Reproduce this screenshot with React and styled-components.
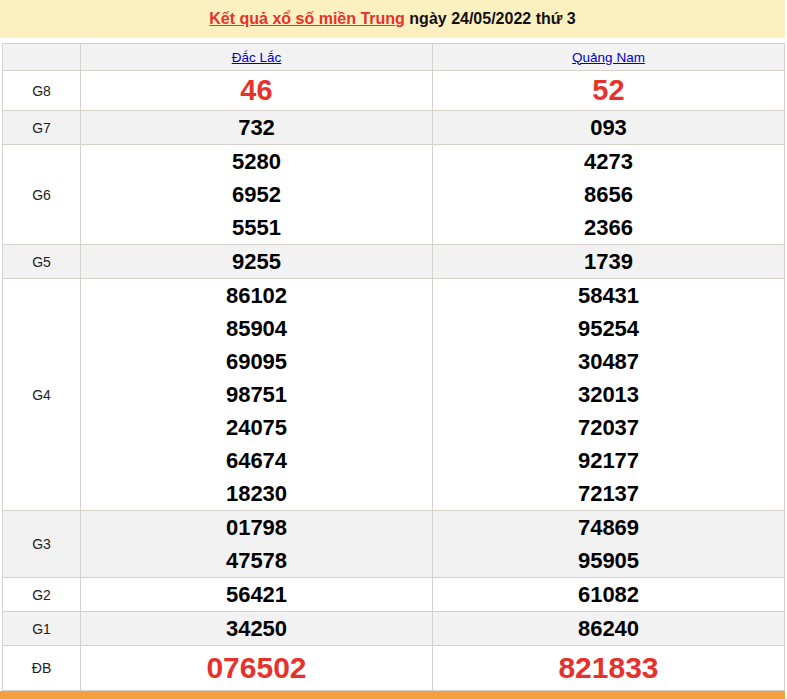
import React from 'react';
import styled, { createGlobalStyle } from 'styled-components';

const GlobalStyle = createGlobalStyle`
  body {
    margin: 0;
    background: #fff;
    font-family: Arial, "Liberation Sans", sans-serif;
  }
`

const Wrapper = styled.div`
  width: 785px;
`

const Heading = styled.h2`
  margin: 0 0 5px;
  height: 38px;
  line-height: 37px;
  background: #fdf0c0;
  text-align: center;
  font-size: 16px;
  font-weight: bold;
  color: #111;
`

const HeadingLink = styled.a`
  color: #e5322d;
  text-decoration: underline;
`

const Table = styled.table`
  width: 783px;
  margin-left: 2px;
  border-collapse: collapse;
  table-layout: fixed;
  border: 1px solid #d6d2cb;
`

const Row = styled.tr`
  background: ${(p) => (p.$gray ? '#f2f2f2' : '#fff')};
`

const HeadCell = styled.th`
  border: 1px solid #d6d2cb;
  padding: 0;
  height: 26px;
  font-size: 13.5px;
  font-weight: normal;
  text-align: center;
`

const ProvinceLink = styled.a`
  color: #0000cc;
  text-decoration: underline;
`

const Label = styled.td`
  border: 1px solid #d6d2cb;
  padding: 0;
  text-align: center;
  font-size: 14px;
  color: #222;
`

const Cell = styled.td`
  border: 1px solid #d6d2cb;
  padding: 0;
  text-align: center;
  vertical-align: middle;
`

const Num = styled.div`
  font-weight: bold;
  font-size: ${(p) => p.$size}px;
  line-height: ${(p) => p.$line}px;
  color: ${(p) => (p.$red ? '#e5322d' : '#000')};
`

const Footer = styled.div`
  height: 40px;
  background: #f4a03f;
`

const prizes = [
  { name: 'G8', a: ['46'], b: ['52'], red: true, size: 29, line: 39 },
  { name: 'G7', a: ['732'], b: ['093'] },
  { name: 'G6', a: ['5280', '6952', '5551'], b: ['4273', '8656', '2366'] },
  { name: 'G5', a: ['9255'], b: ['1739'] },
  {
    name: 'G4',
    a: ['86102', '85904', '69095', '98751', '24075', '64674', '18230'],
    b: ['58431', '95254', '30487', '32013', '72037', '92177', '72137'],
  },
  { name: 'G3', a: ['01798', '47578'], b: ['74869', '95905'] },
  { name: 'G2', a: ['56421'], b: ['61082'] },
  { name: 'G1', a: ['34250'], b: ['86240'] },
  { name: 'ĐB', a: ['076502'], b: ['821833'], red: true, size: 30, line: 44 },
]

const Numbers = ({ list, prize }) => (
  <Cell>
    {list.map((n) => (
      <Num key={n} $red={prize.red} $size={prize.size || 22} $line={prize.line || 33}>
        {n}
      </Num>
    ))}
  </Cell>
)

const App = () => {
  return (
    <>
      <GlobalStyle />
      <Wrapper>
        <Heading>
          <HeadingLink href="#">Kết quả xổ số miền Trung</HeadingLink> ngày 24/05/2022 thứ 3
        </Heading>

        <Table>
          <colgroup>
            <col style={{ width: '78px' }} />
            <col />
            <col />
          </colgroup>
          <thead>
            <Row $gray>
              <HeadCell />
              <HeadCell><ProvinceLink href="#">Đắc Lắc</ProvinceLink></HeadCell>
              <HeadCell><ProvinceLink href="#">Quảng Nam</ProvinceLink></HeadCell>
            </Row>
          </thead>
          <tbody>
            {prizes.map((p, i) => (
              <Row key={p.name} $gray={i % 2 === 1}>
                <Label>{p.name}</Label>
                <Numbers list={p.a} prize={p} />
                <Numbers list={p.b} prize={p} />
              </Row>
            ))}
          </tbody>
        </Table>

        <Footer />
      </Wrapper>
    </>
  )
}

export default App;
